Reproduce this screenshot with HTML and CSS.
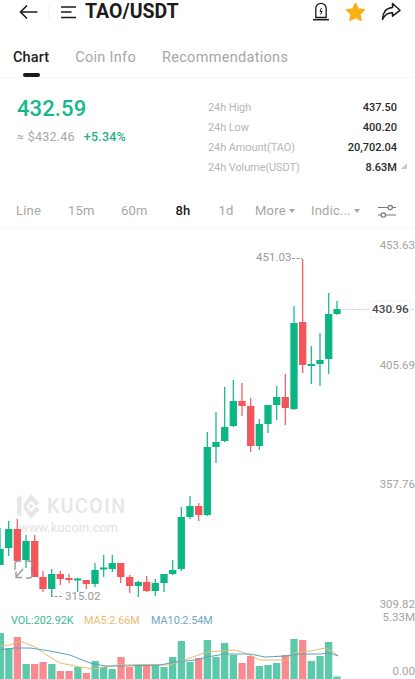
FILE: index.html
```html
<!DOCTYPE html>
<html lang="en">
<head>
<meta charset="utf-8">
<title>TAO/USDT</title>
<link rel="stylesheet" href="styles.css">
</head>
<body>
<main class="screen">
  <header class="topbar">
    <svg class="ico-back" width="20" height="16" viewBox="0 0 20 16"><path d="M18.500 8H1.500M8 1.500 1.500 8 8 14.500" fill="none" stroke="#1b1b1b" stroke-width="1.600"/></svg>
    <span class="divider"></span>
    <svg class="ico-menu" width="16" height="13" viewBox="0 0 16 13"><path d="M0 1h15M0 6h10.500M0 11.500h15" fill="none" stroke="#1b1b1b" stroke-width="1.600"/></svg>
    <h1 class="pair">TAO/USDT</h1>
    <div class="actions">
      <svg width="18" height="19" viewBox="0 0 18 19"><path d="M3.800 15.500V6.500a5.200 5.200 0 0 1 10.400 0v9z" fill="none" stroke="#1b1b1b" stroke-width="1.300"/><path d="M1 17.700h16" stroke="#1b1b1b" stroke-width="1.500"/><path d="M9.500 6 8 9.500h2L8.500 12.500" fill="none" stroke="#1b1b1b" stroke-width="1"/></svg>
      <svg width="21" height="20" viewBox="0 0 21 20"><path d="M10.500 1.500l2.700 5.600 6.100.8-4.500 4.200 1.200 6.100-5.500-3-5.500 3 1.200-6.100L1.700 7.900l6.100-.8z" fill="#f8b016" stroke="#f8b016" stroke-width="1.600" stroke-linejoin="round"/></svg>
      <svg width="20" height="19" viewBox="0 0 20 19"><path d="M11.500 1.500 19 8.300l-7.500 5.900V10.800C7 10.500 3.800 12.800 1.500 17.500 1.600 10.800 5 5.800 11.500 5.400z" fill="none" stroke="#1b1b1b" stroke-width="1.500" stroke-linejoin="round"/></svg>
    </div>
  </header>

  <nav class="tabs">
    <span class="tab tab-on">Chart</span>
    <span class="tab">Coin Info</span>
    <span class="tab">Recommendations</span>
  </nav>

  <section class="stats">
    <div class="quote">
      <div class="price">432.59</div>
      <div class="sub"><span class="fiat">≈ $432.46</span><span class="chg">+5.34%</span></div>
    </div>
    <dl class="table">
      <div class="row"><dt>24h High</dt><dd>437.50</dd></div>
      <div class="row"><dt>24h Low</dt><dd>400.20</dd></div>
      <div class="row"><dt>24h Amount(TAO)</dt><dd>20,702.04</dd></div>
      <div class="row"><dt>24h Volume(USDT)</dt><dd>8.63M</dd></div>
    </dl>
    <span class="corner"></span>
  </section>

  <nav class="frames">
    <span class="fr fr-line">Line</span>
    <span class="fr fr-15">15m</span>
    <span class="fr fr-60">60m</span>
    <span class="fr fr-8 fr-on">8h</span>
    <span class="fr fr-1">1d</span>
    <span class="fr fr-more">More<i class="caret"></i></span>
    <span class="fr fr-ind">Indic...<i class="caret"></i></span>
    <svg class="ico-set" width="18" height="15" viewBox="0 0 18 15"><path d="M0 3.500h10M14.500 3.500H18M0 11h3M7.500 11H18" stroke="#777" stroke-width="1.200" fill="none"/><circle cx="12.200" cy="3.500" r="2.200" fill="none" stroke="#777" stroke-width="1.200"/><circle cx="5.300" cy="11" r="2.200" fill="none" stroke="#777" stroke-width="1.200"/></svg>
  </nav>

  <section class="chart">
    <svg class="plot" width="415" height="450" viewBox="0 229 415 450">
      <g class="mark">
        <path d="M17 498 21.500 495V517L17 514ZM23.500 504.500 31 494 39.500 503 36 506 31 500.500 26.500 506 31 512 36 506.500 39.500 510 31 519 23.500 508.500ZM31 503.500 33.500 506 31 508.500 28.500 506Z" fill="#e6e6e6" fill-rule="evenodd"/>
        <text x="47" y="513" class="wm-big">KUCOIN</text>
        <text x="19" y="532" class="wm-small">www.kucoin.com</text>
      </g>

      <!-- volume -->
      <g fill="#5cc9ab">
        <rect x="-3" y="633" width="7" height="46"/><rect x="5.200" y="648" width="7.300" height="31"/><rect x="22.500" y="664" width="7.300" height="15"/><rect x="48.200" y="664" width="7.300" height="15"/><rect x="74.200" y="667" width="7.300" height="12"/><rect x="91.500" y="661" width="7.300" height="18"/><rect x="100" y="667" width="7.300" height="12"/><rect x="108.500" y="669" width="7.300" height="10"/><rect x="134.700" y="665" width="7.300" height="14"/><rect x="151.700" y="665" width="7.300" height="14"/><rect x="160.400" y="667" width="7.300" height="12"/><rect x="169" y="657" width="7.300" height="22"/><rect x="177.700" y="641" width="7.300" height="38"/><rect x="186.400" y="662" width="7.300" height="17"/><rect x="203.700" y="640" width="7.300" height="39"/><rect x="212.400" y="657" width="7.300" height="22"/><rect x="221" y="643" width="7.300" height="36"/><rect x="229.700" y="655" width="7.300" height="24"/><rect x="255.700" y="666" width="7.300" height="13"/><rect x="264.400" y="665" width="7.300" height="14"/><rect x="273" y="663" width="7.300" height="16"/><rect x="290.400" y="639" width="7.300" height="40"/><rect x="307.700" y="661" width="7.300" height="18"/><rect x="316.400" y="656" width="7.300" height="23"/><rect x="325" y="642" width="7.300" height="37"/><rect x="333.400" y="676.500" width="7.300" height="3"/>
      </g>
      <g fill="#f78b8f">
        <rect x="13.700" y="637" width="7.300" height="42"/><rect x="31" y="664" width="7.300" height="15"/><rect x="39.400" y="662" width="7.300" height="17"/><rect x="56.700" y="671" width="7.300" height="8"/><rect x="65.400" y="671" width="7.300" height="8"/><rect x="82.700" y="673" width="7.300" height="6"/><rect x="117.400" y="657" width="7.300" height="22"/><rect x="126" y="667" width="7.300" height="12"/><rect x="143" y="665" width="7.300" height="14"/><rect x="195" y="658" width="7.300" height="21"/><rect x="238.400" y="663" width="7.300" height="16"/><rect x="247" y="656" width="7.300" height="23"/><rect x="281.700" y="655" width="7.300" height="24"/><rect x="299" y="640" width="7.300" height="39"/>
      </g>
      <path class="ma5" d="M0 646 10 645 20 641 35 647 45 654 60 663 80 667 95 669 103 667 120 665 140 664.500 170 665 190 658 207 652 220 651 235 650 245 653 260 660 285 660 295 653 310 651 325 648 335 653 338 656"/>
      <path class="ma10" d="M0 650 15 648 30 648 50 651 70 655 90 663 105 666 125 666 160 665 175 662 195 660 207 657 225 654 250 654 265 657 285 656 300 654 320 654 330 653 338 656"/>

      <!-- candles -->
      <path class="wick up" d="M0 528V565M8.700 521V556M26 535V568M51.700 569V597M77.700 578V592M95 563V587M103.700 555V577M112.300 555V572M138.300 581V597M155.300 579V596M164 574V592M172.700 560V575M181.300 507V571M190 496V519M207.300 432V516M216 412V463M224.700 387V442M233.300 380V427M259.300 419V450M268 405V433M276.700 386V420M294 306V410M311.300 346V384M320 333V386M328.700 293V374M337 301V315"/>
      <path class="body up" d="M0 549V565M8.700 529V548M26 541V560M51.700 574V589M77.700 578.500V580.500M95 570V584M103.700 567.500V569.500M112.300 563V569M138.300 582V586M155.300 583V591M164 574V583M172.700 570V574M181.300 517V569M190 506V517M207.300 447V515M216 442V447M224.700 427V441M233.300 401V426M259.300 424V446M268 405V424M276.700 397V405M294 323V409M311.300 364V366M320 360V364M328.700 314V359M337 309V314"/>
      <path class="wick down" d="M17.300 519V562M34.700 535V577M43 571V592M60.300 571V585M69 574V583M86.300 580V589M120.700 563V583M129.700 575V593M146.700 576V592M198.700 503V521M242 383V416M250.700 398V452M285.300 374V425M302.700 259V373"/>
      <path class="body down" d="M17.300 529V561M34.700 541V577M43 577V589M60.300 574V579M69 578V580M86.300 580V584M120.700 563V577M129.700 577V586M146.700 582V591M198.700 506V515M242 401V406M250.700 406V446M285.300 397V408M302.700 322V365"/>

      <!-- callouts -->
      <path class="lead" d="M292 258.500H302"/>
      <path class="lead" d="M52 590V596.500H63"/>
      <path class="lead lead-now" d="M343 309.500H369M409 309.500H415"/>
      <rect class="now-box" x="370" y="301" width="40" height="17"/>
      <text x="372" y="313" class="now">430.96</text>
      <text x="256" y="261" class="lbl">451.03</text>
      <text x="65" y="600" class="lbl">315.02</text>

      <!-- axis -->
      <text x="415" y="249" class="axis">453.63</text>
      <text x="415" y="369" class="axis">405.69</text>
      <text x="415" y="488" class="axis">357.76</text>
      <text x="415" y="608" class="axis">309.82</text>
      <text x="415" y="621" class="axis">5.33M</text>
      <text x="415" y="675" class="axis">0.00</text>

      <!-- legend -->
      <text x="11" y="624" class="leg leg-vol">VOL:202.92K</text>
      <text x="84" y="624" class="leg leg-5">MA5:2.66M</text>
      <text x="151" y="624" class="leg leg-10">MA10:2.54M</text>

      <!-- expand -->
      <path class="expand" d="M15 570V564.500Q15 561 18.500 561H21M26 561H29Q32 561 32 564V567M32 572V575Q32 578 29 578H26"/>
      <path class="expand" d="M23 569 16 577M16 571.500V577.500H22"/>
    </svg>
  </section>
</main>
</body>
</html>
```

FILE: styles.css
```css
* { box-sizing: border-box; }
html, body { margin: 0; padding: 0; background: #fff; }
body { font-family: Roboto, "Liberation Sans", sans-serif; }
.screen { width: 415px; height: 679px; overflow: hidden; display: flex; flex-direction: column; }

.topbar { height: 23px; display: flex; align-items: center; padding-left: 19px; }
.ico-back { margin-top: 0; flex: none; }
.divider { width: 1px; height: 14px; background: #f3f3f3; margin-left: 9px; margin-right: 12px; }
.ico-menu { flex: none; margin-top: 1px; }
.pair { margin: 0 0 0 8px; font-size: 19.500px; line-height: 23px; font-weight: 700; color: #1b1b1b; }
.actions { margin-left: auto; display: flex; align-items: center; gap: 15px; padding-right: 14px; }

.tabs { height: 55px; display: flex; gap: 26px; padding: 26px 0 0 13px; border-bottom: 1px solid #f6f6f6; }
.tab { font-size: 14.500px; line-height: 18px; color: #a6a6a6; letter-spacing: .3px; position: relative; }
.tab-on { color: #222; font-weight: 500; letter-spacing: .1px; }
.tab-on::after { content: ""; position: absolute; left: 10px; top: 24px; width: 17px; height: 4px; border-radius: 2px; background: #1b1b1b; }

.stats { height: 114px; display: flex; position: relative; padding: 18px 0 0 17px; }
.quote { width: 191px; }
.price { font-size: 22px; line-height: 26px; font-weight: 500; color: #12b886; letter-spacing: .1px; }
.sub { margin-top: 7px; display: flex; gap: 9px; font-size: 12.500px; line-height: 15px; }
.fiat { color: #a6a6a6; letter-spacing: .25px; }
.chg { color: #20b088; font-weight: 500; letter-spacing: .2px; }
.table { margin: 1px 0 0 0; width: 189px; }
.row { height: 20px; display: flex; justify-content: space-between; align-items: center; }
.row dt { font-size: 11px; color: #b5b5b5; letter-spacing: -.1px; }
.row dd { margin: 0; font-size: 11px; font-weight: 500; color: #2a2a2a; }
.corner { position: absolute; left: 401px; top: 85px; width: 0; height: 0; border-style: solid; border-width: 0 0 6px 6px; border-color: transparent transparent #c9c9c9 transparent; }

.frames { height: 37px; display: flex; align-items: center; position: relative; font-size: 13px; color: #a6a6a6; border-bottom: 1px solid #f6f6f6; padding: 2px 0 0 16px; }
.fr { line-height: 16px; letter-spacing: .2px; white-space: nowrap; flex: none; }
.fr-line { width: 52px; }
.fr-15 { width: 53px; }
.fr-60 { width: 54.500px; }
.fr-8 { width: 43px; }
.fr-1 { width: 36.500px; }
.fr-more { width: 56px; }
.fr-ind { width: 67px; }
.fr-on { color: #1b1b1b; font-weight: 500; }
.caret { display: inline-block; width: 0; height: 0; margin-left: 3px; vertical-align: 2px; border-style: solid; border-width: 4px 3.500px 0; border-color: #a9a9a9 transparent transparent; }
.ico-set { flex: none; }

.chart { flex: 1; min-height: 0; }
.plot { display: block; }
.plot text { font-family: Roboto, "Liberation Sans", sans-serif; }
.wick { fill: none; stroke-width: 1.200; }
.body { fill: none; stroke-width: 7.300; }
.up { stroke: #0cb584; }
.down { stroke: #f2555a; }
.ma5 { fill: none; stroke: #e8bb71; stroke-width: 1; }
.ma10 { fill: none; stroke: #5f9fbb; stroke-width: 1; }
.lead { fill: none; stroke: #999; stroke-width: 1; stroke-dasharray: 3 1.500; }
.lead-now { stroke: #cfcfcf; stroke-dasharray: 2 1; }
.now-box { fill: #fff; stroke: #f2f2f2; stroke-width: 1; }
.now { font-size: 11.800px; fill: #4a4a4a; font-weight: 500; }
.lbl { font-size: 11.500px; fill: #999; }
.axis { font-size: 11.500px; fill: #a3a3a3; text-anchor: end; }
.leg { font-size: 10.800px; }
.leg-vol { fill: #3db795; }
.leg-5 { fill: #e8bb71; }
.leg-10 { fill: #6fa9c2; }
.wm-big { font-size: 19.500px; font-weight: 500; fill: #e6e6e6; letter-spacing: 1.500px; }
.wm-small { font-size: 12.800px; fill: #e2e2e2; letter-spacing: .1px; }
.expand { fill: none; stroke: #9c9c9c; stroke-width: 1.400; }
```
